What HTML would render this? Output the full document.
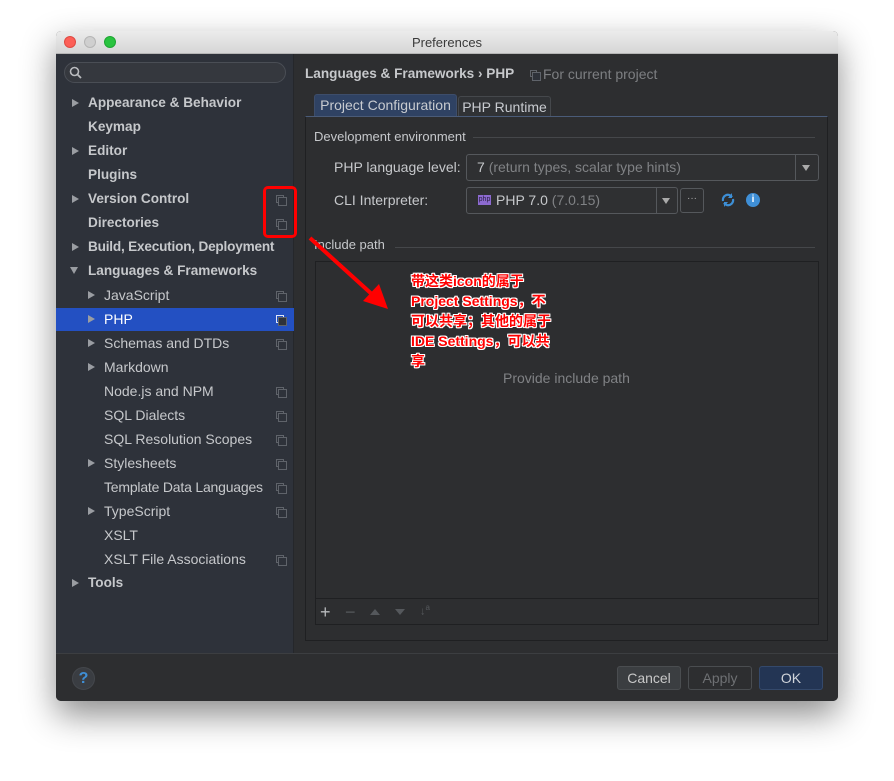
<!DOCTYPE html>
<html><head><meta charset="utf-8"><style>
*{margin:0;padding:0;box-sizing:border-box}
body{width:894px;height:781px;background:#fff;position:relative;font-family:"Liberation Sans","Noto Sans CJK SC",sans-serif;overflow:hidden}
.win{position:absolute;left:56px;top:31px;width:782px;height:670px;border-radius:5px;overflow:hidden;box-shadow:0 14px 34px rgba(0,0,0,.45);background:#2d2e30}
.title{position:absolute;left:0;top:0;width:782px;height:23px;background:linear-gradient(#ececec,#d6d6d6);border-bottom:1px solid #b5b5b5;text-align:center;font-size:13px;color:#3a3a3a;line-height:23px}
.dot{position:absolute;top:5px;width:12px;height:12px;border-radius:50%}
.side{position:absolute;left:0;top:23px;width:238px;height:599px;background:#2e323a;border-right:1px solid #25272b}
.a{position:absolute;font-size:14px;color:#c6c8cb;white-space:nowrap}
.b{font-weight:bold;font-size:13.6px}
.tri{position:absolute;width:0;height:0;border-left:7px solid #9a9da2;border-top:4.5px solid transparent;border-bottom:4.5px solid transparent}
.ic{position:absolute;width:8px;height:8px;border:1px solid #5f636a}
.ic:after{content:"";position:absolute;left:1px;top:1px;width:7px;height:7px;border:1px solid #5f636a;background:#2e323a}
.bottom{position:absolute;left:0;top:622px;width:782px;height:48px;background:#2d2e30;border-top:1px solid #3c3e41}
.btn{position:absolute;top:12px;height:24px;border:1px solid #4a4d50;border-radius:3px;background:#3b3e41;color:#c8c8c8;font-size:14px;text-align:center;line-height:22px}
</style></head><body>
<div class="win">
<div class="title">Preferences
<div class="dot" style="left:8px;background:#fc5f57;border:1px solid #de4a42"></div>
<div class="dot" style="left:28px;background:#cfcfcf;border:1px solid #b5b5b5"></div>
<div class="dot" style="left:48px;background:#29c33f;border:1px solid #1ea532"></div>
</div>
<div class="side">
<div style="position:absolute;left:8px;top:8px;width:222px;height:21px;border:1px solid #4a4e55;border-radius:11px;background:#35383e"></div>
<svg style="position:absolute;left:13px;top:12px" width="14" height="14"><circle cx="5.5" cy="5.5" r="4" stroke="#b9bbbe" stroke-width="1.6" fill="none"/><line x1="8.5" y1="8.5" x2="12" y2="12" stroke="#b9bbbe" stroke-width="1.8"/></svg>
<div style="position:absolute;left:0;top:254px;width:238px;height:23px;background:#2350c2"></div>
</div>
<div class="tri" style="left:16px;top:68px"></div><div class="a b" style="left:32px;top:64px">Appearance &amp; Behavior</div>
<div class="a b" style="left:32px;top:88px">Keymap</div>
<div class="tri" style="left:16px;top:116px"></div><div class="a b" style="left:32px;top:112px">Editor</div>
<div class="a b" style="left:32px;top:136px">Plugins</div>
<div class="tri" style="left:16px;top:164px"></div><div class="a b" style="left:32px;top:160px">Version Control</div><div class="ic" style="left:220px;top:164px"></div>
<div class="a b" style="left:32px;top:184px">Directories</div><div class="ic" style="left:220px;top:188px"></div>
<div class="tri" style="left:16px;top:212px"></div><div class="a b" style="left:32px;top:208px;letter-spacing:-0.2px">Build, Execution, Deployment</div>
<div class="tri" style="left:14px;top:236px;border-top:7px solid #9a9da2;border-left:4.5px solid transparent;border-right:4.5px solid transparent;border-bottom:0"></div><div class="a b" style="left:32px;top:232px">Languages &amp; Frameworks</div>
<div class="tri" style="left:32px;top:260px"></div><div class="a" style="left:48px;top:256px">JavaScript</div><div class="ic" style="left:220px;top:260px"></div>
<div class="tri" style="left:32px;top:284px"></div><div class="a" style="left:48px;top:280px;color:#fff">PHP</div><div class="ic" style="left:220px;top:284px;border-color:#dfe6f8"></div>
<div class="tri" style="left:32px;top:308px"></div><div class="a" style="left:48px;top:304px">Schemas and DTDs</div><div class="ic" style="left:220px;top:308px"></div>
<div class="tri" style="left:32px;top:332px"></div><div class="a" style="left:48px;top:328px">Markdown</div>
<div class="a" style="left:48px;top:352px">Node.js and NPM</div><div class="ic" style="left:220px;top:356px"></div>
<div class="a" style="left:48px;top:376px">SQL Dialects</div><div class="ic" style="left:220px;top:380px"></div>
<div class="a" style="left:48px;top:400px">SQL Resolution Scopes</div><div class="ic" style="left:220px;top:404px"></div>
<div class="tri" style="left:32px;top:428px"></div><div class="a" style="left:48px;top:424px">Stylesheets</div><div class="ic" style="left:220px;top:428px"></div>
<div class="a" style="left:48px;top:448px;letter-spacing:-0.2px">Template Data Languages</div><div class="ic" style="left:220px;top:452px"></div>
<div class="tri" style="left:32px;top:476px"></div><div class="a" style="left:48px;top:472px">TypeScript</div><div class="ic" style="left:220px;top:476px"></div>
<div class="a" style="left:48px;top:496px">XSLT</div>
<div class="a" style="left:48px;top:520px">XSLT File Associations</div><div class="ic" style="left:220px;top:524px"></div>
<div class="tri" style="left:16px;top:548px"></div><div class="a b" style="left:32px;top:544px">Tools</div>
<div style="position:absolute;left:207px;top:155px;width:34px;height:52px;border:3px solid #ff0000;border-radius:5px"></div>

<div class="a b" style="left:249px;top:35px;color:#c6c8cb">Languages &amp; Frameworks › PHP</div>
<div class="ic" style="left:474px;top:39px;width:7px;height:7px"></div>
<div class="a" style="left:487px;top:35px;color:#7d7f82">For current project</div>
<div style="position:absolute;left:258px;top:63px;width:143px;height:23px;background:#2f4263;border:1px solid #3d4d6a;border-bottom:0;border-radius:3px 3px 0 0;color:#c8cbd0;font-size:14px;line-height:21px;text-align:center">Project Configuration</div>
<div style="position:absolute;left:402px;top:65px;width:93px;height:21px;background:#303235;border:1px solid #45484c;border-bottom:0;border-radius:3px 3px 0 0;color:#c8cbd0;font-size:14px;line-height:20px;text-align:center">PHP Runtime</div>
<div style="position:absolute;left:249px;top:85px;width:523px;height:525px;border:1px solid #1f2022;border-top:1px solid #4a5b78"></div>
<div class="a" style="left:258px;top:98px;font-size:13px">Development environment</div>
<div style="position:absolute;left:417px;top:106px;width:342px;height:1px;background:#45474a"></div>
<div class="a" style="left:278px;top:128px">PHP language level:</div>
<div style="position:absolute;left:410px;top:123px;width:353px;height:27px;border:1px solid #55585c;border-radius:3px;background:#2f3032"></div>
<div style="position:absolute;left:739px;top:124px;width:1px;height:25px;background:#55585c"></div>
<div class="a" style="left:421px;top:128px"><span style="color:#c6c8cb">7</span> <span style="color:#808285">(return types, scalar type hints)</span></div>
<div class="tri" style="left:746px;top:134px;border-top:6px solid #aaa;border-left:4.5px solid transparent;border-right:4.5px solid transparent;border-bottom:0"></div>
<div class="a" style="left:278px;top:161px">CLI Interpreter:</div>
<div style="position:absolute;left:410px;top:156px;width:212px;height:27px;border:1px solid #55585c;border-radius:3px;background:#2f3032"></div>
<div style="position:absolute;left:600px;top:157px;width:1px;height:25px;background:#55585c"></div>
<div class="tri" style="left:606px;top:167px;border-top:6px solid #aaa;border-left:4.5px solid transparent;border-right:4.5px solid transparent;border-bottom:0"></div>
<div style="position:absolute;left:422px;top:164px;width:13px;height:10px;background:#8c6ad0;font-size:7px;color:#2a2040;line-height:10px;text-align:center">php</div>
<div class="a" style="left:440px;top:161px"><span style="color:#c6c8cb">PHP 7.0</span> <span style="color:#808285">(7.0.15)</span></div>
<div style="position:absolute;left:624px;top:157px;width:24px;height:25px;border:1px solid #55585c;border-radius:3px;color:#aaa;font-size:10px;text-align:center;line-height:20px">···</div>
<svg style="position:absolute;left:664px;top:161px" width="16" height="16"><path d="M3 9a5 5 0 0 1 9-4M13 7a5 5 0 0 1-9 4" stroke="#3d8fd6" stroke-width="2.2" fill="none"/><path d="M12 1v5h-4z M4 15v-5h4z" fill="#3d8fd6"/></svg>
<div style="position:absolute;left:690px;top:162px;width:14px;height:14px;border-radius:50%;background:#3f8fd6;color:#fff;font-size:10px;font-weight:bold;text-align:center;line-height:14px">i</div>
<div class="a" style="left:258px;top:206px;font-size:13px">Include path</div>
<div style="position:absolute;left:339px;top:216px;width:420px;height:1px;background:#45474a"></div>
<div style="position:absolute;left:259px;top:230px;width:504px;height:364px;border:1px solid #1f2022"></div>
<div style="position:absolute;left:259px;top:567px;width:504px;height:1px;background:#1f2022"></div>
<div class="a" style="left:447px;top:339px;color:#808285">Provide include path</div>
<div class="a" style="left:264px;top:571px;font-size:18px;color:#b8babd">+</div>
<div class="a" style="left:289px;top:571px;font-size:18px;color:#55585c">−</div>
<div class="tri" style="left:314px;top:578px;border-bottom:6px solid #55585c;border-left:5px solid transparent;border-right:5px solid transparent;border-top:0"></div>
<div class="tri" style="left:339px;top:578px;border-top:6px solid #55585c;border-left:5px solid transparent;border-right:5px solid transparent;border-bottom:0"></div>
<div class="a" style="left:364px;top:572px;font-size:11px;color:#55585c">↓<sup style="font-size:8px">a</sup></div>

<div class="bottom">
<div style="position:absolute;left:16px;top:13px;width:23px;height:23px;border-radius:50%;background:#3a3d42;border:1px solid #44474c;color:#3f8fd6;font-weight:bold;font-size:16px;text-align:center;line-height:21px">?</div>
<div class="btn" style="left:561px;width:64px">Cancel</div>
<div class="btn" style="left:632px;width:64px;background:#2d2e30;color:#6e7073">Apply</div>
<div class="btn" style="left:703px;width:64px;background:#233554;border-color:#34496b;color:#d0d4da">OK</div>
</div>
</div>
<svg style="position:absolute;left:300px;top:230px" width="100" height="90"><line x1="10" y1="8" x2="75" y2="67" stroke="#ff0000" stroke-width="4"/><polygon points="88,79 63,71 79,54" fill="#ff0000"/></svg>
<div style="position:absolute;left:411px;top:271px;font-size:14px;line-height:20px;font-weight:bold;color:#ff0000;text-shadow:-1px 0 #fff,1px 0 #fff,0 -1px #fff,0 1px #fff,1px 1px #fff,-1px -1px #fff,1px -1px #fff,-1px 1px #fff;white-space:nowrap">带这类icon的属于<br>Project Settings，不<br>可以共享；其他的属于<br>IDE Settings，可以共<br>享</div>
</body></html>
